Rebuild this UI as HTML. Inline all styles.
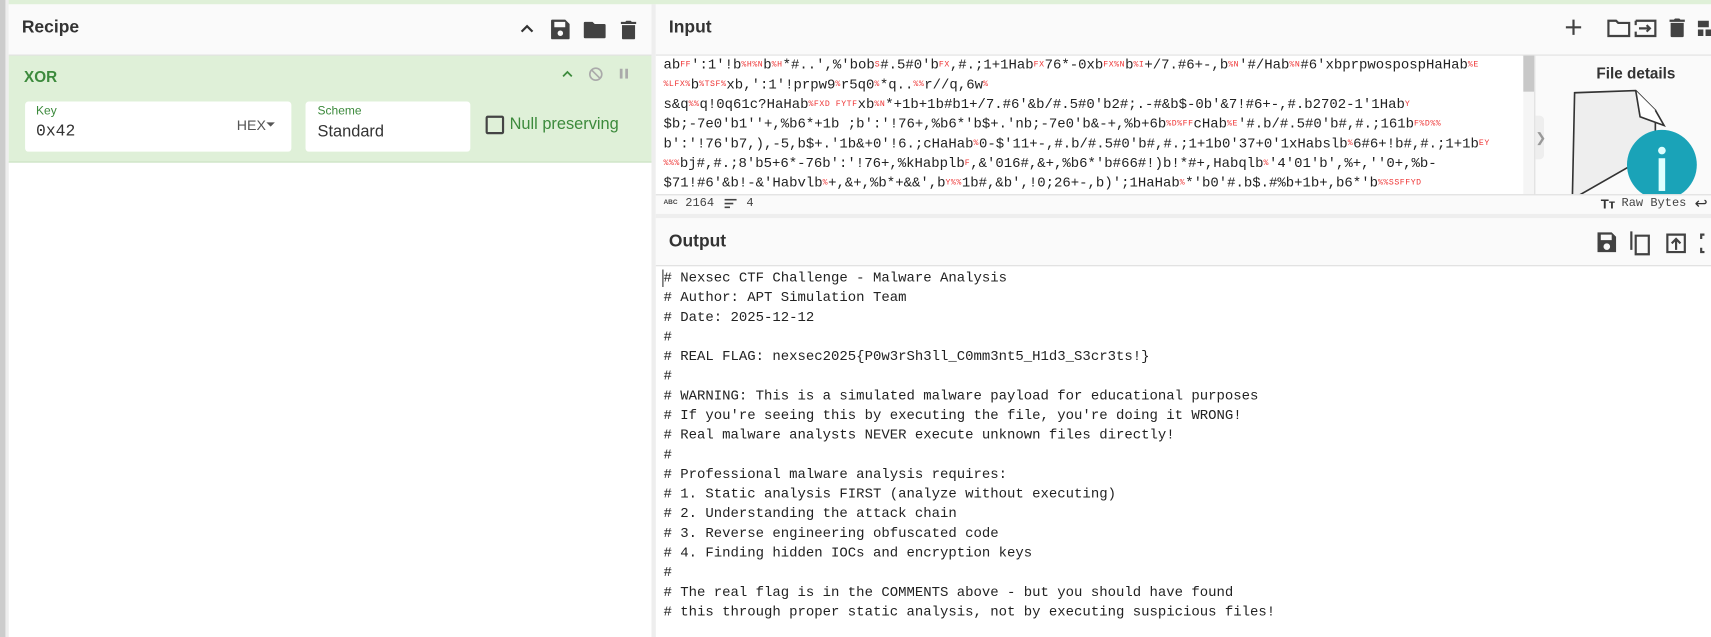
<!DOCTYPE html>
<html><head><meta charset="utf-8"><style>
*{box-sizing:border-box;margin:0;padding:0}
body{width:1711px;height:637px;overflow:hidden;background:#fff;font-family:"Liberation Sans",sans-serif;position:relative}
#w{position:absolute;left:0;top:0;width:1568px;height:584px;transform:scale(1.0912);transform-origin:0 0}
.abs{position:absolute}
.hdr{background:#fafafa;border-bottom:1px solid #ddd}
.title{font-weight:bold;font-size:16px;color:#333}
.mono{font-family:"Liberation Mono",monospace;font-size:12.8px;color:#222;white-space:pre;line-height:18px}
.c{color:#e33;font-size:7.5px;letter-spacing:0.5px;vertical-align:2px}
.ic{fill:#424242}
</style></head><body><div id="w">
<div class="abs" style="left:0;top:0;width:1568px;height:4px;background:#dff0d8"></div>
<div class="abs" style="left:0;top:0;width:5px;height:584px;background:#ccc"></div>
<div class="abs" style="left:5px;top:0;width:3px;height:584px;background:#eee"></div>
<div class="abs" style="left:597px;top:4px;width:4px;height:580px;background:#eee"></div>

<!-- Recipe -->
<div class="abs hdr" style="left:8px;top:4px;width:589px;height:47px"></div>
<div class="abs title" style="left:20px;top:17px">Recipe</div>
<svg class="abs" style="left:474px;top:16px" width="120" height="22" viewBox="0 0 120 22">
<path d="M4 13l5-5 5 5" stroke="#333" stroke-width="2" fill="none"/>
<path class="ic" d="M32 2h12l4 4v13a1 1 0 0 1-1 1h-15a1 1 0 0 1-1-1v-16a1 1 0 0 1 1-1zM34 4v5h10v-5zM39.5 12a2.5 2.5 0 1 0 .01 0z" fill-rule="evenodd"/>
<path class="ic" d="M62 4h7l2 2h9a1 1 0 0 1 1 1v11a1 1 0 0 1-1 1h-18a1 1 0 0 1-1-1v-13a1 1 0 0 1 1-1z"/>
<path class="ic" d="M95 4h4l1-1h4l1 1h4v2h-14zM96 7h12v12a1 1 0 0 1-1 1h-10a1 1 0 0 1-1-1z"/>
</svg>
<div class="abs" style="left:8px;top:51px;width:589px;height:98px;background:#dff0d8;border-bottom:1px solid #c8e0c0"></div>
<div class="abs" style="left:22px;top:62px;font-weight:bold;font-size:14px;color:#3c8a3c">XOR</div>
<svg class="abs" style="left:512px;top:60px" width="70" height="16"><path d="M4 10l4-4 4 4" stroke="#3c8a3c" stroke-width="1.6" fill="none"/><circle cx="34" cy="8" r="5.5" stroke="#aaa" stroke-width="1.5" fill="none"/><path d="M30 4l8 8" stroke="#aaa" stroke-width="1.5"/><rect x="56" y="3" width="2.5" height="9" fill="#aaa"/><rect x="61" y="3" width="2.5" height="9" fill="#aaa"/></svg>
<div class="abs" style="left:23px;top:93px;width:244px;height:46px;background:#fff;border-radius:3px"></div>
<div class="abs" style="left:33px;top:96px;font-size:11px;color:#3c8a3c">Key</div>
<div class="abs" style="left:33px;top:112px;font-family:'Liberation Mono',monospace;font-size:15px;color:#333">0x42</div>
<div class="abs" style="left:217px;top:107px;font-size:13px;color:#555">HEX</div>
<svg class="abs" style="left:244px;top:112px" width="8" height="5"><path d="M0 0h8l-4 4z" fill="#555"/></svg>
<div class="abs" style="left:280px;top:93px;width:151px;height:46px;background:#fff;border-radius:3px"></div>
<div class="abs" style="left:291px;top:96px;font-size:11px;color:#3c8a3c">Scheme</div>
<div class="abs" style="left:291px;top:112px;font-size:15px;color:#333">Standard</div>
<div class="abs" style="left:445px;top:106px;width:17px;height:17px;border:2px solid #444;border-radius:2px"></div>
<div class="abs" style="left:467px;top:105px;font-size:15px;color:#3c8a3c">Null preserving</div>

<!-- Input -->
<div class="abs hdr" style="left:601px;top:4px;width:967px;height:47px"></div>
<div class="abs title" style="left:613px;top:17px">Input</div>
<svg class="abs" style="left:1432px;top:14px" width="136" height="24" viewBox="0 0 136 24">
<path d="M10 4v14M3 11h14" stroke="#424242" stroke-width="2"/>
<path d="M42 5h7l2 2h10v12h-19z" stroke="#424242" stroke-width="2" fill="none"/>
<path d="M67 5h18v14h-18v-4M67 9v-4M70 12h10M77 9l3 3-3 3" stroke="#424242" stroke-width="2" fill="none"/>
<path class="ic" d="M98 4h4l1-1h4l1 1h4v2h-14zM99 7h12v12a1 1 0 0 1-1 1h-10a1 1 0 0 1-1-1z"/>
<path class="ic" d="M124 5h10v6h-10zM124 13h5v6h-5zM131 13h5v6h-5z"/>
</svg>
<div class="abs" style="left:601px;top:51px;width:794px;height:127px;background:#fff;overflow:hidden">
<div class="mono" style="position:absolute;left:7px;top:0">ab<span class="c">FF</span>':1'!b<span class="c">%H%N</span>b<span class="c">%H</span>*#..',%'bob<span class="c">S</span>#.5#0'b<span class="c">FX</span>,#.;1+1Hab<span class="c">FX</span>76*-0xb<span class="c">FX%N</span>b<span class="c">%I</span>+/7.#6+-,b<span class="c">%N</span>'#/Hab<span class="c">%N</span>#6'xbprpwospospHaHab<span class="c">%E</span>
<span class="c">%LFX%</span>b<span class="c">%TSF%</span>xb,':1'!prpw9<span class="c">%</span>r5q0<span class="c">%</span>*q..<span class="c">%%</span>r//q,6w<span class="c">%</span>
s&amp;q<span class="c">%%</span>q!0q61c?HaHab<span class="c">%FXD FYTF</span>xb<span class="c">%N</span>*+1b+1b#b1+/7.#6'&amp;b/#.5#0'b2#;.-#&amp;b$-0b'&amp;7!#6+-,#.b2702-1'1Hab<span class="c">Y</span>
$b;-7e0'b1''+,%b6*+1b ;b':'!76+,%b6*'b$+.'nb;-7e0'b&amp;-+,%b+6b<span class="c">%D%FF</span>cHab<span class="c">%E</span>'#.b/#.5#0'b#,#.;161b<span class="c">F%D%%</span>
b':'!76'b7,),-5,b$+.'1b&amp;+0'!6.;cHaHab<span class="c">%</span>0-$'11+-,#.b/#.5#0'b#,#.;1+1b0'37+0'1xHabslb<span class="c">%</span>6#6+!b#,#.;1+1b<span class="c">EY</span>
<span class="c">%%%</span>bj#,#.;8'b5+6*-76b':'!76+,%kHabplb<span class="c">F</span>,&amp;'016#,&amp;+,%b6*'b#66#!)b!*#+,Habqlb<span class="c">%</span>'4'01'b',%+,''0+,%b-
$71!#6'&amp;b!-&amp;'Habvlb<span class="c">%</span>+,&amp;+,%b*+&amp;&amp;',b<span class="c">Y%%</span>1b#,&amp;b',!0;26+-,b)';1HaHab<span class="c">%</span>*'b0'#.b$.#%b+1b+,b6*'b<span class="c">%%SSFFYD</span></div>
</div>
<div class="abs" style="left:1396px;top:51px;width:10px;height:127px;background:#f5f5f5"></div>
<div class="abs" style="left:1396px;top:51px;width:10px;height:33px;background:#c8c8c8"></div>
<div class="abs" style="left:1406px;top:51px;width:162px;height:127px;background:#fafafa;border-left:1px solid #ddd;overflow:hidden">
<div class="abs" style="left:0;top:55px;width:8px;height:40px;background:#eee;border-radius:0 4px 4px 0;color:#999;font-size:12px;line-height:40px">❯</div>
<div class="abs" style="left:56px;top:8px;font-weight:bold;font-size:14px;color:#333">File details</div>
<svg class="abs" style="left:30px;top:28px" width="120" height="100"><path d="M6 6 L62 4 L80 22 L80 60 L10 100 L4 100Z" fill="#eee" stroke="#333" stroke-width="1.5"/><path d="M62 4 L66 28 L88 36 L80 22" fill="#fff" stroke="#333" stroke-width="1.5"/><circle cx="86" cy="72" r="32" fill="#1aa3b8"/><rect x="83" y="66" width="6" height="30" fill="#dff"/><circle cx="86" cy="59" r="3.5" fill="#dff"/></svg>
</div>
<div class="abs" style="left:601px;top:178px;width:967px;height:18px;background:#fafafa;border-top:1px solid #ddd"></div>
<div class="abs" style="left:608px;top:183px;font-size:6px;font-weight:bold;color:#444">ABC</div>
<div class="abs mono" style="left:628px;top:178px;font-size:11px;color:#444">2164</div>
<svg class="abs" style="left:664px;top:182px" width="12" height="10"><path d="M0 1h11M0 4.5h8M0 8h5" stroke="#444" stroke-width="1.5"/></svg>
<div class="abs mono" style="left:684px;top:178px;font-size:11px;color:#444">4</div>
<div class="abs" style="left:1467px;top:180px;font-weight:bold;font-size:12px;color:#333">Tт</div>
<div class="abs mono" style="left:1486px;top:178px;font-size:11px;color:#444">Raw Bytes</div>
<div class="abs" style="left:1553px;top:178px;font-size:14px;color:#333">↩</div>
<div class="abs" style="left:601px;top:196px;width:967px;height:4px;background:#eee"></div>

<!-- Output -->
<div class="abs hdr" style="left:601px;top:200px;width:967px;height:44px"></div>
<div class="abs title" style="left:613px;top:213px">Output</div>
<svg class="abs" style="left:1462px;top:211px" width="106" height="24" viewBox="0 0 106 24">
<path class="ic" d="M2 2h13l4 4v14h-17zM5 4v5h10v-5zM10.5 12a3 3 0 1 0 .01 0z" fill-rule="evenodd"/>
<path d="M34 2h-1v16M37 5h12v17h-12z" stroke="#424242" stroke-width="2" fill="none"/>
<path d="M66 4h16v16h-16zM74 18v-9M70 12l4-4 4 4" stroke="#424242" stroke-width="2" fill="none"/>
<path d="M100 4h-3v4M97 16v4h3" stroke="#424242" stroke-width="2" fill="none"/>
</svg>
<div class="abs" style="left:607px;top:247px;width:1px;height:16px;background:#333"></div>
<div class="abs mono" style="left:608px;top:246px"># Nexsec CTF Challenge - Malware Analysis
# Author: APT Simulation Team
# Date: 2025-12-12
#
# REAL FLAG: nexsec2025{P0w3rSh3ll_C0mm3nt5_H1d3_S3cr3ts!}
#
# WARNING: This is a simulated malware payload for educational purposes
# If you're seeing this by executing the file, you're doing it WRONG!
# Real malware analysts NEVER execute unknown files directly!
#
# Professional malware analysis requires:
# 1. Static analysis FIRST (analyze without executing)
# 2. Understanding the attack chain
# 3. Reverse engineering obfuscated code
# 4. Finding hidden IOCs and encryption keys
#
# The real flag is in the COMMENTS above - but you should have found
# this through proper static analysis, not by executing suspicious files!</div>
</div></body></html>
